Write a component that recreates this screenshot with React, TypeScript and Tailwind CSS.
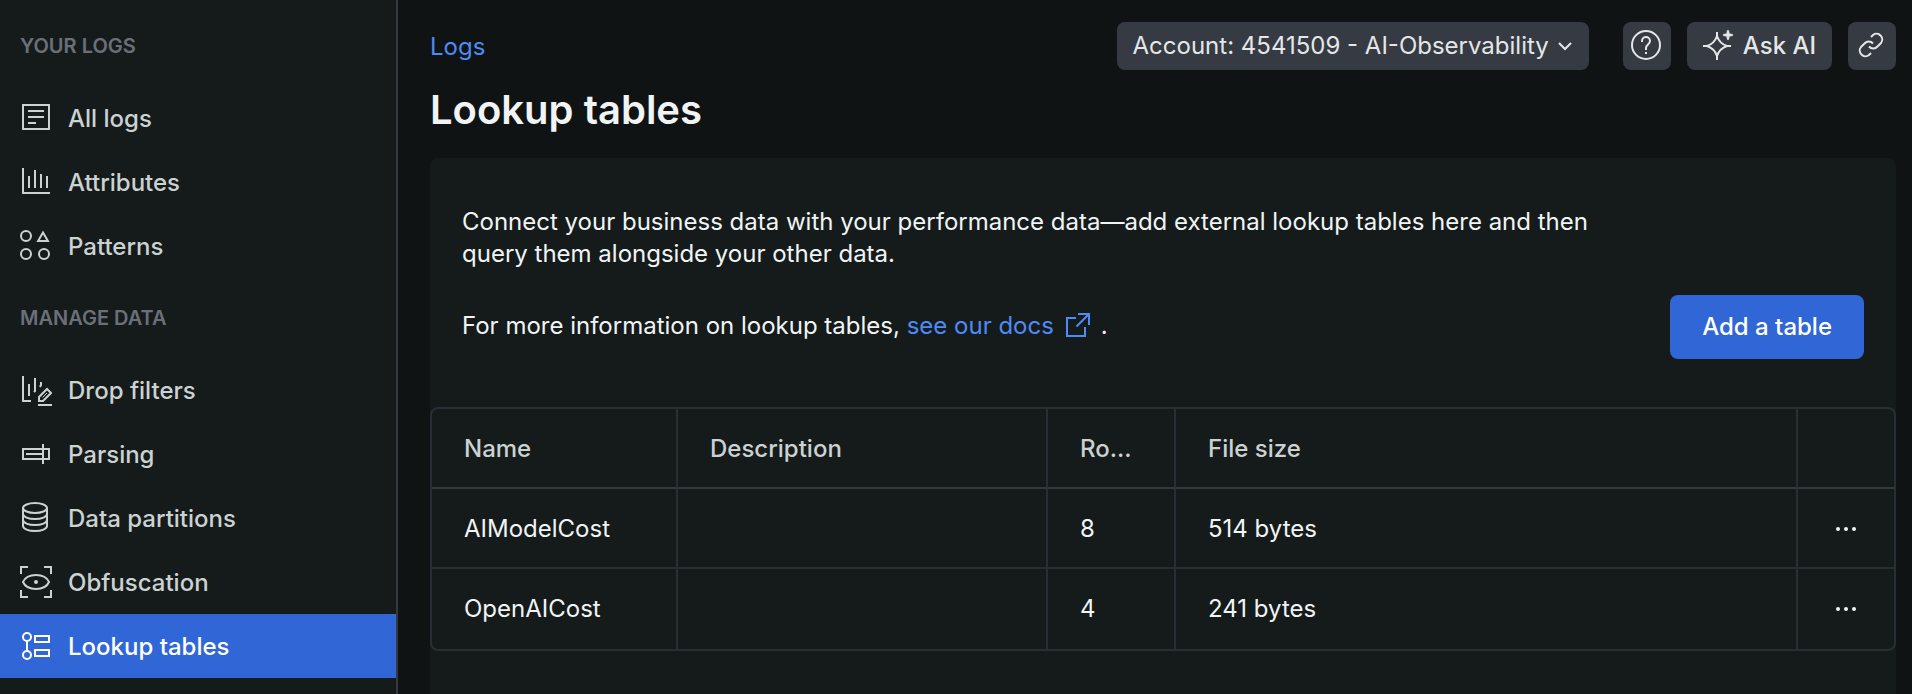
import type { ReactNode } from "react";

type IconProps = { children: ReactNode };

function Icon({ children }: IconProps) {
  return (
    <svg
      viewBox="0 0 32 32"
      fill="none"
      stroke="currentColor"
      strokeWidth="2"
      className="size-8 shrink-0"
      aria-hidden="true"
    >
      {children}
    </svg>
  );
}

type NavEntry = { label: string; icon: ReactNode; active?: boolean };

const yourLogs: NavEntry[] = [
  {
    label: "All logs",
    icon: (
      <Icon>
        <path d="M3 3h26v24H3z" />
        <path d="M8 9h16M8 15h16M8 21h8" />
      </Icon>
    ),
  },
  {
    label: "Attributes",
    icon: (
      <Icon>
        <path d="M3 2v25h27" />
        <path d="M9 10v12M15 4v18M21 8v14M27 10v12" />
      </Icon>
    ),
  },
  {
    label: "Patterns",
    icon: (
      <Icon>
        <circle cx="6" cy="6" r="5" />
        <circle cx="6" cy="24" r="5" />
        <circle cx="24" cy="24" r="5" />
        <path d="M23 2.5l4.9 8.5h-9.8z" />
      </Icon>
    ),
  },
];

const manageData: NavEntry[] = [
  {
    label: "Drop filters",
    icon: (
      <Icon>
        <path d="M3 2v25h8" />
        <path d="M9 10v12M15 4v13l-1 1M21 8v3l-1 2" />
        <path d="M19 27v-4l8-8 4 4-8 8z" />
        <path d="M22.5 23.5l4.500-4.500" strokeWidth="1" />
        <path d="M18 31h14" />
      </Icon>
    ),
  },
  {
    label: "Parsing",
    icon: (
      <Icon>
        <path d="M3 11h26v10H3zM6 16h17M23 6v20" />
      </Icon>
    ),
  },
  {
    label: "Data partitions",
    icon: (
      <Icon>
        <ellipse cx="15" cy="6" rx="12" ry="5" />
        <path d="M3 6v18c0 2.800 5.400 5 12 5s12-2.200 12-5V6" />
        <path d="M3 12c0 2.800 5.400 5 12 5s12-2.200 12-5M3 18c0 2.800 5.400 5 12 5s12-2.200 12-5" />
      </Icon>
    ),
  },
  {
    label: "Obfuscation",
    icon: (
      <Icon>
        <path d="M1 8V1h7M24 1h7v7M31 24v7h-7M8 31H1v-7" />
        <path d="M3 16c2-4.500 7-7 13-7s11 2.500 13 7c-2 4.500-7 7-13 7s-11-2.500-13-7z" />
        <circle cx="16" cy="16" r="2" fill="currentColor" stroke="none" />
      </Icon>
    ),
  },
  {
    label: "Lookup tables",
    active: true,
    icon: (
      <Icon>
        <circle cx="7" cy="7" r="4" />
        <circle cx="7" cy="25" r="4" />
        <path d="M7 11v10M15 6h14v6H15zM15 20h14v6H15z" />
      </Icon>
    ),
  },
];

function NavSection({ title, items }: { title: string; items: NavEntry[] }) {
  return (
    <section>
      <h2 className="flex h-20 items-center px-5 text-xl font-semibold text-[#6b7078]">{title}</h2>
      <ul>
        {items.map((item) => (
          <li key={item.label}>
            <a
              href="#"
              aria-current={item.active ? "page" : undefined}
              className={`flex h-16 items-center gap-4 px-5 font-medium ${
                item.active ? "bg-[#3066d5] text-white" : "text-[#ccd2d1]"
              }`}
            >
              {item.icon}
              <span className="pt-0.5">{item.label}</span>
            </a>
          </li>
        ))}
      </ul>
    </section>
  );
}

const rows = [
  { name: "AIModelCost", description: "", count: 8, size: "514 bytes" },
  { name: "OpenAICost", description: "", count: 4, size: "241 bytes" },
];

const headCell = "h-20 border-b-2 border-b-[#343940] px-8 pt-0.5 text-left font-medium whitespace-nowrap text-[#ccd2d1]";
const divider = "border-r-2 border-r-[#292e34]";
const bodyCell = "h-20 px-8 group-not-last:border-b-2 group-not-last:border-b-[#292e34] group-not-last:pt-0.5";

export default function App() {
  return (
    <div className="flex min-h-screen bg-[#0f1314] font-[Inter,sans-serif] text-2xl/8 text-[#f1f4f4]">
      <nav className="w-[398px] shrink-0 border-r-2 border-[#363a40] bg-[#151b1b] pt-1.5">
        <NavSection title="YOUR LOGS" items={yourLogs} />
        <NavSection title="MANAGE DATA" items={manageData} />
      </nav>

      <main className="flex min-w-0 flex-1 flex-col pt-[22px] pr-4 pl-8">
        <header className="flex h-12 items-center gap-4">
          <a href="#" className="mr-auto pt-0.5 text-[#4e8bf5]">
            Logs
          </a>
          <button
            type="button"
            className="mr-[18px] flex h-12 items-center gap-2 rounded-lg bg-[#363a42] px-4 text-[#e3e7e8]"
          >
            Account: 4541509 - AI-Observability
            <svg viewBox="0 0 16 16" fill="none" stroke="currentColor" strokeWidth="2" className="size-4" aria-hidden="true">
              <path d="M2 5l6 6 6-6" />
            </svg>
          </button>
          <button
            type="button"
            aria-label="Help"
            className="flex size-12 items-center justify-center rounded-lg bg-[#363a42] text-[#e3e7e8]"
          >
            <Icon>
              <circle cx="15" cy="15" r="14" />
              <path d="M11 12v-1a4 4 0 0 1 8 0c0 3.500-4 3.500-4 7v2M15 22v2" />
            </Icon>
          </button>
          <button
            type="button"
            className="flex h-12 items-center gap-2 rounded-lg bg-[#363a42] px-4 font-medium text-[#e3e7e8]"
          >
            <Icon>
              <path d="M14 2v4c-1.500 4.500-5.500 8.500-10 10H0M14 2v4c1.500 4.500 5.500 8.500 10 10h4M14 30v-4c-1.500-4.500-5.500-8.500-10-10M14 30v-4c1.500-4.500 5.500-8.500 10-10" />
              <path
                d="M25 0c.700 0 1 1 1.300 3.700C29 4 30 4.300 30 5s-1 1-3.700 1.300C26 9 25.700 10 25 10s-1-1-1.300-3.700C21 6 20 5.700 20 5s1-1 3.700-1.300C24 1 24.300 0 25 0z"
                fill="currentColor"
                strokeWidth="0.500"
              />
            </Icon>
            Ask AI
          </button>
          <button
            type="button"
            aria-label="Copy link"
            className="flex size-12 items-center justify-center rounded-lg bg-[#363a42] text-[#e3e7e8]"
          >
            <Icon>
              <path d="M15 7l2-2a5.700 5.700 0 0 1 8 8l-3.500 3.500a5.700 5.700 0 0 1-8.500 0" />
              <path d="M15 23l-2 2a5.700 5.700 0 0 1-8-8l3.500-3.500a5.700 5.700 0 0 1 8.500 0" />
            </Icon>
          </button>
        </header>

        <h1 className="mt-4 mb-6 text-[40px]/12 font-semibold">Lookup tables</h1>

        <div className="flex-1 rounded-t-lg bg-[#151b1b]">
          <div className="flex items-end justify-between gap-8 px-8 py-12">
            <div className="max-w-[1140px]">
              <p>
                Connect your business data with your performance data—add external lookup tables here and then query
                them alongside your other data.
              </p>
              <p className="mt-10 mb-[17px]">
                For more information on lookup tables,{" "}
                <a href="#" className="text-[#4e8bf5]">
                  see our docs
                  <svg
                    viewBox="0 0 24 24"
                    fill="none"
                    stroke="currentColor"
                    strokeWidth="2"
                    className="mr-1 ml-3 inline size-6 align-[-3px]"
                    aria-hidden="true"
                  >
                    <path d="M10 5H1v18h18v-9M12 1h11v11M23 1L10.500 13.500" />
                  </svg>
                </a>{" "}
                .
              </p>
            </div>
            <button type="button" className="h-16 shrink-0 rounded-lg bg-[#3066d5] px-8 font-medium text-white">
              Add a table
            </button>
          </div>

          <div className="overflow-hidden rounded-lg border-2 border-[#292e34]">
            <table className="w-full table-fixed border-separate border-spacing-0">
              <colgroup>
                <col className="w-[246px]" />
                <col className="w-[370px]" />
                <col className="w-32" />
                <col />
                <col className="w-24" />
              </colgroup>
              <thead>
                <tr>
                  <th className={`${headCell} ${divider}`}>Name</th>
                  <th className={`${headCell} ${divider}`}>Description</th>
                  <th className={`${headCell} ${divider}`}>Ro...</th>
                  <th className={`${headCell} ${divider}`}>File size</th>
                  <th className={headCell} aria-label="Actions" />
                </tr>
              </thead>
              <tbody>
                {rows.map((row) => (
                  <tr key={row.name} className="group">
                    <td className={`${bodyCell} ${divider}`}>{row.name}</td>
                    <td className={`${bodyCell} ${divider}`}>{row.description}</td>
                    <td className={`${bodyCell} ${divider}`}>{row.count}</td>
                    <td className={`${bodyCell} ${divider}`}>{row.size}</td>
                    <td className={bodyCell}>
                      <button type="button" aria-label={`Actions for ${row.name}`} className="flex size-8 items-center">
                        <svg viewBox="0 0 32 32" fill="currentColor" className="size-8" aria-hidden="true">
                          <circle cx="8" cy="16" r="2" />
                          <circle cx="16" cy="16" r="2" />
                          <circle cx="24" cy="16" r="2" />
                        </svg>
                      </button>
                    </td>
                  </tr>
                ))}
              </tbody>
            </table>
          </div>
        </div>
      </main>
    </div>
  );
}
